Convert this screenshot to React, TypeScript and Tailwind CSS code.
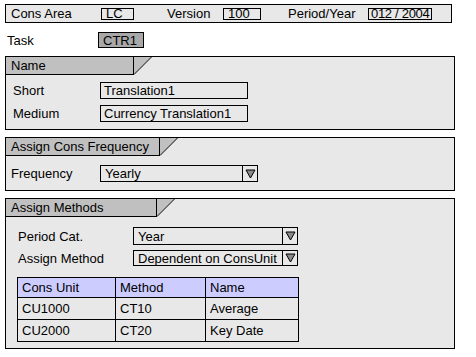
import React from "react";

const Tab = ({ label, w }: { label: string; w: string }) => (
  <div className="flex h-[18px]">
    <div className={`${w} h-[18px] bg-[#c0c0c0] border-b border-r border-black pl-[5px] flex items-center`}>
      {label}
    </div>
    <svg width="18" height="18" className="block">
      <polygon points="0,0 17,0 0,17" fill="#c0c0c0" />
      <line x1="0" y1="17.5" x2="17.5" y2="0" stroke="#000" strokeWidth="1" />
    </svg>
  </div>
);

const Arrow = () => (
  <svg width="11" height="10" viewBox="0 0 11 10" className="block">
    <polygon points="1,1 10,1 5.5,9" fill="#8a8a8a" stroke="#000" strokeWidth="1" />
  </svg>
);

const Select = ({ value, w, h }: { value: string; w: string; h: string }) => (
  <div className={`${w} ${h} border border-black flex`}>
    <div className="flex-1 pl-[4px] flex items-center whitespace-nowrap overflow-hidden">{value}</div>
    <div className="w-[15px] border-l border-black flex items-center justify-center">
      <Arrow />
    </div>
  </div>
);

const Field = ({ value, w = "w-[148px]" }: { value: string; w?: string }) => (
  <div className={`${w} h-[17px] border border-black pl-[3px] flex items-center`}>{value}</div>
);

const rows = [
  ["CU1000", "CT10", "Average"],
  ["CU2000", "CT20", "Key Date"],
];

export default function App() {
  return (
    <div
      className="w-[476px] h-[357px] bg-white text-[13px] leading-none text-black pt-[4px] pl-[5px]"
      style={{ fontFamily: '"Liberation Sans", Arial, sans-serif' }}
    >
      {/* Header bar */}
      <div className="w-[447px] h-[19px] border border-black bg-[#e8e8e8] flex items-center whitespace-nowrap">
        <span className="ml-[5px] w-[90px]">Cons Area</span>
        <div className="w-[33px] h-[12px] border border-black flex items-center pl-[4px]">LC</div>
        <span className="ml-[33px] w-[56px]">Version</span>
        <div className="w-[38px] h-[12px] border border-black flex items-center pl-[4px]">100</div>
        <span className="ml-[27px] w-[80px]">Period/Year</span>
        <div className="w-[64px] h-[12px] border border-black flex items-center pl-[2px] tracking-[-0.3px]">012 / 2004</div>
      </div>

      {/* Task */}
      <div className="mt-[9px] flex items-center h-[16px]">
        <span className="ml-[2px] w-[91px]">Task</span>
        <div className="w-[46px] h-[16px] border border-black bg-[#a8a8a8] pl-[4px] flex items-center">CTR1</div>
      </div>

      {/* Name */}
      <div className="mt-[8px] w-[450px] border border-black bg-[#e8e8e8] pb-[7px]">
        <Tab label="Name" w="w-[128px]" />
        <div className="mt-[7px] flex items-center">
          <span className="ml-[7px] w-[87px]">Short</span>
          <Field value="Translation1" />
        </div>
        <div className="mt-[6px] flex items-center">
          <span className="ml-[7px] w-[87px]">Medium</span>
          <Field value="Currency Translation1" />
        </div>
      </div>

      {/* Frequency */}
      <div className="mt-[7px] w-[450px] border border-black bg-[#e8e8e8] pb-[8px]">
        <Tab label="Assign Cons Frequency" w="w-[154px]" />
        <div className="mt-[9px] flex items-center">
          <span className="ml-[5px] w-[89px]">Frequency</span>
          <Select value="Yearly" w="w-[158px]" h="h-[17px]" />
        </div>
      </div>

      {/* Methods */}
      <div className="mt-[7px] w-[450px] border border-black bg-[#e8e8e8] pb-[6px]">
        <Tab label="Assign Methods" w="w-[151px]" />
        <div className="mt-[10px] flex items-center">
          <span className="ml-[12px] w-[115px]">Period Cat.</span>
          <Select value="Year" w="w-[165px]" h="h-[18px]" />
        </div>
        <div className="mt-[5px] flex items-center">
          <span className="ml-[12px] w-[115px]">Assign Method</span>
          <Select value="Dependent on ConsUnit" w="w-[165px]" h="h-[16px]" />
        </div>
        <table className="mt-[11px] ml-[11px] border-collapse">
          <thead>
            <tr className="bg-[#ccccff] h-[20px]">
              <th className="w-[98px] border border-black text-left font-normal pl-[4px] py-0">Cons Unit</th>
              <th className="w-[90px] border border-black text-left font-normal pl-[4px] py-0">Method</th>
              <th className="w-[93px] border border-black text-left font-normal pl-[4px] py-0">Name</th>
            </tr>
          </thead>
          <tbody>
            {rows.map((r) => (
              <tr key={r[0]} className="h-[22px]">
                {r.map((c) => (
                  <td key={c} className="border border-black pl-[4px] py-0">{c}</td>
                ))}
              </tr>
            ))}
          </tbody>
        </table>
      </div>
    </div>
  );
}
